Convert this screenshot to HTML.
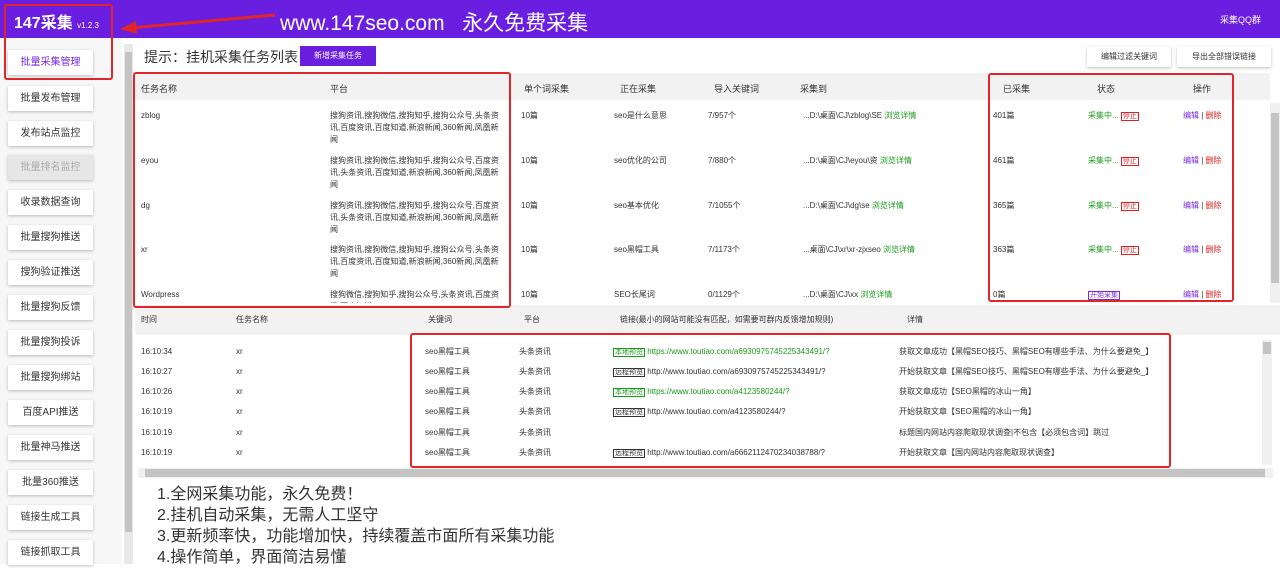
<!DOCTYPE html>
<html><head><meta charset="utf-8"><style>
*{margin:0;padding:0;box-sizing:border-box}
body{width:1280px;height:564px;overflow:hidden;background:#fff;font-family:"Liberation Sans","Noto Sans CJK SC",sans-serif;color:#333;position:relative;font-size:9px}
.hdr{position:absolute;left:0;top:0;width:1280px;height:38px;background:#6a1ee0;color:#fff}
.abs{position:absolute;white-space:nowrap}
.side{position:absolute;left:0;top:38px;width:122px;height:526px;background:#f7f7f7}
.btn{position:absolute;left:8px;width:85px;height:25px;background:#fff;box-shadow:0 1px 3px rgba(0,0,0,.25);font-size:10px;text-align:center;line-height:25px;color:#333}
.red{position:absolute;border:2px solid #e0262a;border-radius:3px}
.g{color:#1a9a1a}.p{color:#7a2ae0}.r{color:#e02020}
.tag{border:1px solid #333;font-size:7px;padding:0 1px}
</style></head><body>
<div class="hdr">
<div class="abs" style="left:14px;top:9px;font-size:16px;font-weight:bold">147采集 <span style="font-size:8px;font-weight:normal">v1.2.3</span></div>
<div class="abs" style="left:280px;top:7px;font-size:21px">www.147seo.com&nbsp;&nbsp;&nbsp;永久免费采集</div>
<div class="abs" style="left:1220px;top:13px;font-size:9px">采集QQ群</div>
</div>
<svg class="abs" style="left:110px;top:8px" width="170" height="30"><line x1="165" y1="7" x2="20" y2="20" stroke="#e0262a" stroke-width="3"/><polygon points="10,21 26,13 27,26" fill="#e0262a"/></svg>
<div class="side">
<div class="btn" style="top:12px;color:#7a2ae0">批量采集管理</div>
<div class="btn" style="top:48px">批量发布管理</div>
<div class="btn" style="top:83px">发布站点监控</div>
<div class="btn" style="top:117px;background:#e6e6e6;color:#aaa">批量排名监控</div>
<div class="btn" style="top:152px">收录数据查询</div>
<div class="btn" style="top:187px">批量搜狗推送</div>
<div class="btn" style="top:222px">搜狗验证推送</div>
<div class="btn" style="top:257px">批量搜狗反馈</div>
<div class="btn" style="top:292px">批量搜狗投诉</div>
<div class="btn" style="top:327px">批量搜狗绑站</div>
<div class="btn" style="top:362px">百度API推送</div>
<div class="btn" style="top:397px">批量神马推送</div>
<div class="btn" style="top:432px">批量360推送</div>
<div class="btn" style="top:467px">链接生成工具</div>
<div class="btn" style="top:502px">链接抓取工具</div>
</div>
<div class="abs" style="left:124px;top:44px;width:9px;height:520px;background:#e8e8e8"></div>
<div class="abs" style="left:125px;top:52px;width:7px;height:480px;background:#c4c4c4"></div>
<div class="red" style="left:4px;top:4px;width:109px;height:76px"></div>

<div class="abs" style="left:144px;top:47px;font-size:14px">提示：挂机采集任务列表</div>
<div class="abs" style="left:300px;top:46px;width:76px;height:20px;background:#6a1ee0;color:#fff;font-size:8px;text-align:center;line-height:20px">新增采集任务</div>
<div class="abs" style="left:1087px;top:47px;width:84px;height:20px;background:#fff;box-shadow:0 1px 3px rgba(0,0,0,.25);font-size:8px;text-align:center;line-height:20px">编辑过滤关键词</div>
<div class="abs" style="left:1177px;top:47px;width:94px;height:20px;background:#fff;box-shadow:0 1px 3px rgba(0,0,0,.25);font-size:8px;text-align:center;line-height:20px">导出全部错误链接</div>

<div class="abs" style="left:135px;top:73px;width:1135px;height:27px;background:#f2f2f2"></div>
<div class="abs" style="left:141px;top:82px">任务名称</div>
<div class="abs" style="left:330px;top:82px">平台</div>
<div class="abs" style="left:524px;top:82px">单个词采集</div>
<div class="abs" style="left:620px;top:82px">正在采集</div>
<div class="abs" style="left:714px;top:82px">导入关键词</div>
<div class="abs" style="left:800px;top:82px">采集到</div>
<div class="abs" style="left:1003px;top:82px">已采集</div>
<div class="abs" style="left:1097px;top:82px">状态</div>
<div class="abs" style="left:1193px;top:82px">操作</div>

<div class="abs" style="left:1270px;top:103px;width:10px;height:200px;background:#f0f0f0"></div>
<div class="abs" style="left:1271px;top:113px;width:8px;height:170px;background:#c4c4c4"></div>

<div style="position:absolute;left:0;top:110px;font-size:8px;line-height:12px">
<div class="abs" style="left:141px;top:0">zblog</div>
<div class="abs" style="left:330px;top:0;white-space:normal;width:175px">搜狗资讯,搜狗微信,搜狗知乎,搜狗公众号,头条资讯,百度资讯,百度知道,新浪新闻,360新闻,凤凰新闻</div>
<div class="abs" style="left:521px;top:0">10篇</div><div class="abs" style="left:614px;top:0">seo是什么意思</div><div class="abs" style="left:708px;top:0">7/957个</div>
<div class="abs" style="left:803px;top:0">...D:\桌面\CJ\zblog\SE <span class="g">浏览详情</span></div>
<div class="abs" style="left:993px;top:0">401篇</div><div class="abs" style="left:1088px;top:0"><span class="g">采集中...</span> <span class="tag r" style="border-color:#e02020">停止</span></div><div class="abs" style="left:1183px;top:0"><span class="p">编辑</span> | <span class="r">删除</span></div>
</div>
<div style="position:absolute;left:0;top:155px;font-size:8px;line-height:12px">
<div class="abs" style="left:141px;top:0">eyou</div>
<div class="abs" style="left:330px;top:0;white-space:normal;width:175px">搜狗资讯,搜狗微信,搜狗知乎,搜狗公众号,百度资讯,头条资讯,百度知道,新浪新闻,360新闻,凤凰新闻</div>
<div class="abs" style="left:521px;top:0">10篇</div><div class="abs" style="left:614px;top:0">seo优化的公司</div><div class="abs" style="left:708px;top:0">7/880个</div>
<div class="abs" style="left:803px;top:0">...D:\桌面\CJ\eyou\资 <span class="g">浏览详情</span></div>
<div class="abs" style="left:993px;top:0">461篇</div><div class="abs" style="left:1088px;top:0"><span class="g">采集中...</span> <span class="tag r" style="border-color:#e02020">停止</span></div><div class="abs" style="left:1183px;top:0"><span class="p">编辑</span> | <span class="r">删除</span></div>
</div>
<div style="position:absolute;left:0;top:200px;font-size:8px;line-height:12px">
<div class="abs" style="left:141px;top:0">dg</div>
<div class="abs" style="left:330px;top:0;white-space:normal;width:175px">搜狗资讯,搜狗微信,搜狗知乎,搜狗公众号,百度资讯,头条资讯,百度知道,新浪新闻,360新闻,凤凰新闻</div>
<div class="abs" style="left:521px;top:0">10篇</div><div class="abs" style="left:614px;top:0">seo基本优化</div><div class="abs" style="left:708px;top:0">7/1055个</div>
<div class="abs" style="left:803px;top:0">...D:\桌面\CJ\dg\se <span class="g">浏览详情</span></div>
<div class="abs" style="left:993px;top:0">365篇</div><div class="abs" style="left:1088px;top:0"><span class="g">采集中...</span> <span class="tag r" style="border-color:#e02020">停止</span></div><div class="abs" style="left:1183px;top:0"><span class="p">编辑</span> | <span class="r">删除</span></div>
</div>
<div style="position:absolute;left:0;top:244px;font-size:8px;line-height:12px">
<div class="abs" style="left:141px;top:0">xr</div>
<div class="abs" style="left:330px;top:0;white-space:normal;width:175px">搜狗资讯,搜狗微信,搜狗知乎,搜狗公众号,头条资讯,百度资讯,百度知道,新浪新闻,360新闻,凤凰新闻</div>
<div class="abs" style="left:521px;top:0">10篇</div><div class="abs" style="left:614px;top:0">seo黑帽工具</div><div class="abs" style="left:708px;top:0">7/1173个</div>
<div class="abs" style="left:803px;top:0">...桌面\CJ\xr\xr-zjxseo <span class="g">浏览详情</span></div>
<div class="abs" style="left:993px;top:0">363篇</div><div class="abs" style="left:1088px;top:0"><span class="g">采集中...</span> <span class="tag r" style="border-color:#e02020">停止</span></div><div class="abs" style="left:1183px;top:0"><span class="p">编辑</span> | <span class="r">删除</span></div>
</div>
<div style="position:absolute;left:0;top:289px;font-size:8px;line-height:12px">
<div class="abs" style="left:141px;top:0">Wordpress</div>
<div class="abs" style="left:330px;top:0;height:14px;overflow:hidden;white-space:normal;width:175px">搜狗微信,搜狗知乎,搜狗公众号,头条资讯,百度资讯,百度知道</div>
<div class="abs" style="left:521px;top:0">10篇</div><div class="abs" style="left:614px;top:0">SEO长尾词</div><div class="abs" style="left:708px;top:0">0/1129个</div>
<div class="abs" style="left:803px;top:0">...D:\桌面\CJ\xx <span class="g">浏览详情</span></div>
<div class="abs" style="left:993px;top:0">0篇</div><div class="abs" style="left:1088px;top:0"><span class="tag p" style="border-color:#7a2ae0">开始采集</span></div><div class="abs" style="left:1183px;top:0"><span class="p">编辑</span> | <span class="r">删除</span></div>
</div>

<div class="abs" style="left:135px;top:305px;width:1145px;height:30px;background:#f2f2f2"></div>
<div style="font-size:8px">
<div class="abs" style="left:141px;top:314px">时间</div><div class="abs" style="left:236px;top:314px">任务名称</div><div class="abs" style="left:428px;top:314px">关键词</div><div class="abs" style="left:524px;top:314px">平台</div><div class="abs" style="left:620px;top:314px">链接(最小的网站可能没有匹配，如需要可群内反馈增加规则)</div><div class="abs" style="left:907px;top:314px">详情</div>
</div>
<div style="font-size:8px;line-height:12px">
<div class="abs" style="left:141px;top:346px">16:10:34</div><div class="abs" style="left:236px;top:346px">xr</div><div class="abs" style="left:425px;top:346px">seo黑帽工具</div><div class="abs" style="left:519px;top:346px">头条资讯</div><div class="abs g" style="left:613px;top:346px"><span class="tag" style="border-color:#1a9a1a">本地预览</span> https://www.toutiao.com/a6930975745225343491/?</div><div class="abs" style="left:899px;top:346px">获取文章成功【黑帽SEO技巧、黑帽SEO有哪些手法、为什么要避免_】</div>
<div class="abs" style="left:141px;top:366px">16:10:27</div><div class="abs" style="left:236px;top:366px">xr</div><div class="abs" style="left:425px;top:366px">seo黑帽工具</div><div class="abs" style="left:519px;top:366px">头条资讯</div><div class="abs" style="left:613px;top:366px"><span class="tag">远程预览</span> http://www.toutiao.com/a6930975745225343491/?</div><div class="abs" style="left:899px;top:366px">开始获取文章【黑帽SEO技巧、黑帽SEO有哪些手法、为什么要避免_】</div>
<div class="abs" style="left:141px;top:386px">16:10:26</div><div class="abs" style="left:236px;top:386px">xr</div><div class="abs" style="left:425px;top:386px">seo黑帽工具</div><div class="abs" style="left:519px;top:386px">头条资讯</div><div class="abs g" style="left:613px;top:386px"><span class="tag" style="border-color:#1a9a1a">本地预览</span> https://www.toutiao.com/a4123580244/?</div><div class="abs" style="left:899px;top:386px">获取文章成功【SEO黑帽的冰山一角】</div>
<div class="abs" style="left:141px;top:406px">16:10:19</div><div class="abs" style="left:236px;top:406px">xr</div><div class="abs" style="left:425px;top:406px">seo黑帽工具</div><div class="abs" style="left:519px;top:406px">头条资讯</div><div class="abs" style="left:613px;top:406px"><span class="tag">远程预览</span> http://www.toutiao.com/a4123580244/?</div><div class="abs" style="left:899px;top:406px">开始获取文章【SEO黑帽的冰山一角】</div>
<div class="abs" style="left:141px;top:427px">16:10:19</div><div class="abs" style="left:236px;top:427px">xr</div><div class="abs" style="left:425px;top:427px">seo黑帽工具</div><div class="abs" style="left:519px;top:427px">头条资讯</div><div class="abs" style="left:899px;top:427px">标题国内网站内容爬取现状调查|不包含【必须包含词】跳过</div>
<div class="abs" style="left:141px;top:447px">16:10:19</div><div class="abs" style="left:236px;top:447px">xr</div><div class="abs" style="left:425px;top:447px">seo黑帽工具</div><div class="abs" style="left:519px;top:447px">头条资讯</div><div class="abs" style="left:613px;top:447px"><span class="tag">远程预览</span> http://www.toutiao.com/a6662112470234038788/?</div><div class="abs" style="left:899px;top:447px">开始获取文章【国内网站内容爬取现状调查】</div>
</div>
<div class="abs" style="left:1262px;top:340px;width:10px;height:125px;background:#f0f0f0"></div>
<div class="abs" style="left:1263px;top:342px;width:8px;height:12px;background:#c4c4c4"></div>
<div class="abs" style="left:138px;top:468px;width:1135px;height:10px;background:#f0f0f0"></div>
<div class="abs" style="left:145px;top:469px;width:1120px;height:8px;background:#c4c4c4"></div>

<div style="font-size:16px;line-height:21px;color:#333">
<div class="abs" style="left:157px;top:484px">1.全网采集功能，永久免费！</div>
<div class="abs" style="left:157px;top:505px">2.挂机自动采集，无需人工坚守</div>
<div class="abs" style="left:157px;top:526px">3.更新频率快，功能增加快，持续覆盖市面所有采集功能</div>
<div class="abs" style="left:157px;top:547px">4.操作简单，界面简洁易懂</div>
</div>

<div class="red" style="left:133px;top:72px;width:378px;height:236px"></div>
<div class="red" style="left:988px;top:73px;width:246px;height:229px"></div>
<div class="red" style="left:410px;top:333px;width:761px;height:135px"></div>
</body></html>
